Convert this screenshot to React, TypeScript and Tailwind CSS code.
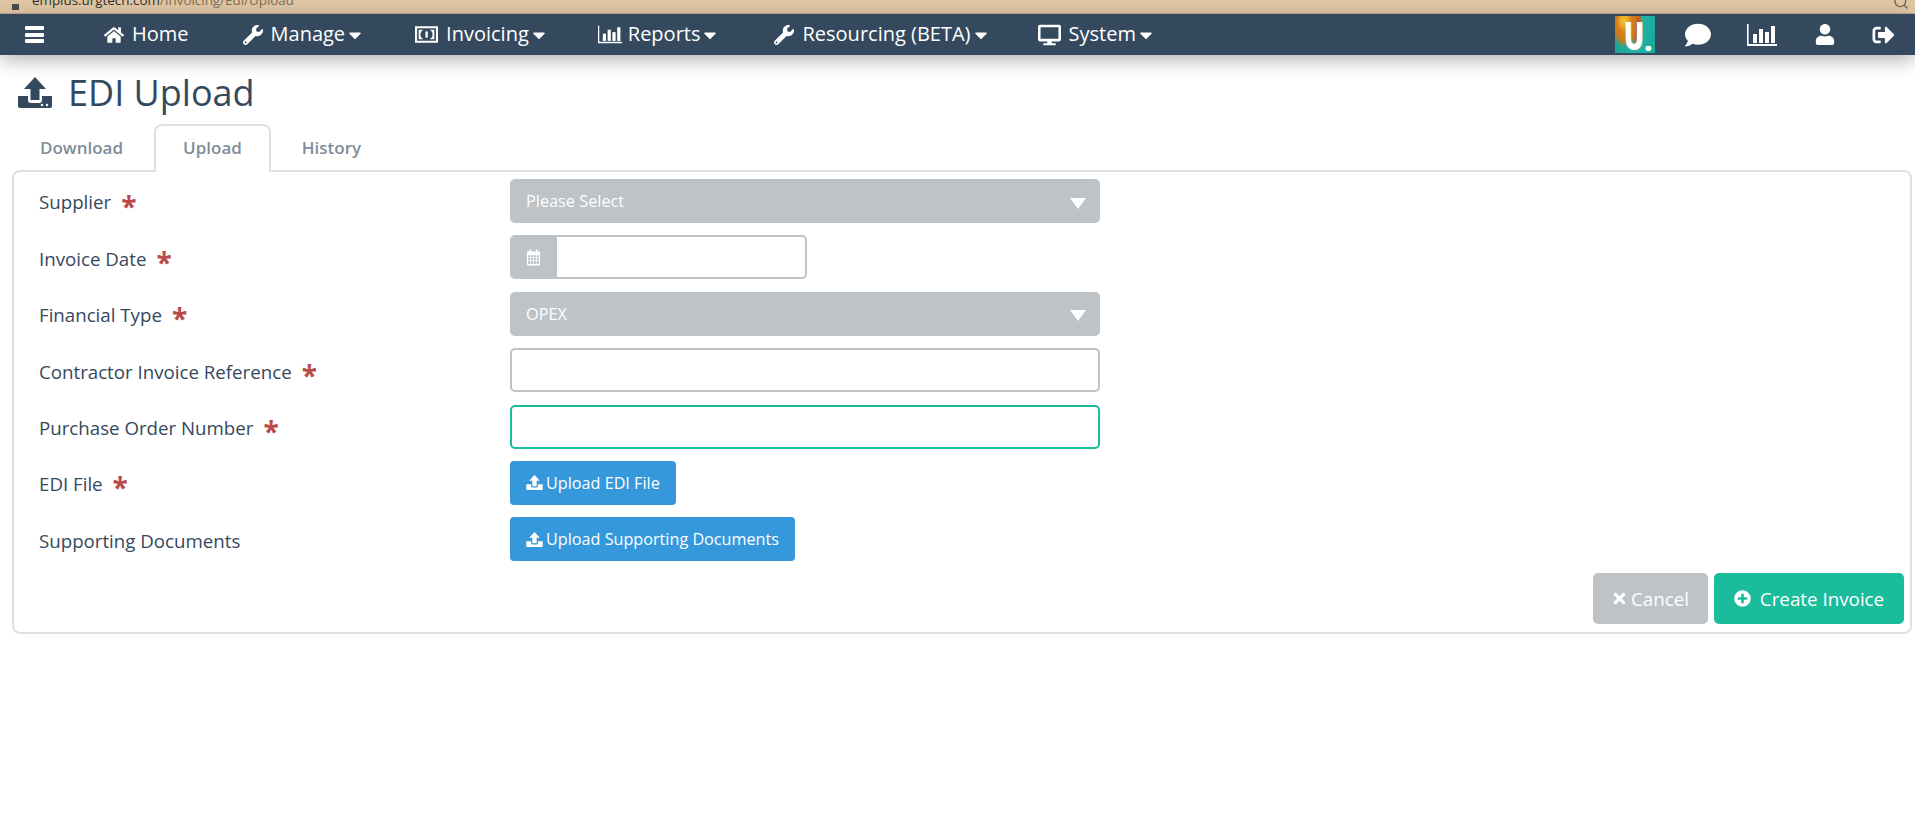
import { FaCaretDown, FaComment, FaDesktop, FaHome, FaPlusCircle, FaSignOutAlt, FaTimes, FaUser, FaWrench } from "react-icons/fa";
import { Search } from "lucide-react";
import { ReactNode } from "react";

function UploadIcon({ className }: { className?: string }) {
  return (
    <svg viewBox="0 0 34 31" className={className} fill="currentColor">
      <path d="M17 0 L28 12 H21.5 V23 H12.5 V12 H6 Z" />
      <path d="M0 19 H10 V23 a3 3 0 0 0 3 3 h8 a3 3 0 0 0 3 -3 V19 H34 V29 a2 2 0 0 1 -2 2 H2 a2 2 0 0 1 -2 -2 Z" />
      <circle cx="24" cy="28" r="1.2" fill="#fff" />
      <circle cx="29" cy="28" r="1.2" fill="#fff" />
    </svg>
  );
}

function BarsIcon({ className }: { className?: string }) {
  return (
    <svg viewBox="0 0 30 22" className={className} fill="currentColor">
      <path d="M0 0 h1.6 v20 h28.4 v2 h-30 z" />
      <rect x="6" y="10" width="4" height="9" />
      <rect x="12" y="5" width="4" height="14" />
      <rect x="18" y="8" width="4" height="11" />
      <rect x="24" y="2" width="4" height="17" />
    </svg>
  );
}

function MoneyIcon({ className }: { className?: string }) {
  return (
    <svg viewBox="0 0 22 16" className={className} fill="currentColor">
      <path fillRule="evenodd" d="M0 0 h22 v16 h-22 z M2 2 v12 h18 v-12 z" />
      <path fillRule="evenodd" d="M3.5 3.5 h4.5 a5 5 0 0 0 0 9 h-4.5 z M18.5 3.5 h-4.5 a5 5 0 0 1 0 9 h4.5 z" />
      <rect x="10" y="5" width="2.2" height="6" />
    </svg>
  );
}

function CalendarIcon({ className }: { className?: string }) {
  return (
    <svg viewBox="0 0 16 18" className={className} fill="currentColor">
      <path fillRule="evenodd" d="M1 2.5 h2.5 v-2 h2 v2 h5 v-2 h2 v2 h2.5 v15 h-14 z M2.2 6.5 v2.2 h2.4 v-2.2 z M5.4 6.5 v2.2 h2.2 v-2.2 z M8.4 6.5 v2.2 h2.2 v-2.2 z M11.4 6.5 v2.2 h2.4 v-2.2 z M2.2 9.5 v2.2 h2.4 v-2.2 z M5.4 9.5 v2.2 h2.2 v-2.2 z M8.4 9.5 v2.2 h2.2 v-2.2 z M11.4 9.5 v2.2 h2.4 v-2.2 z M2.2 12.5 v3.5 h2.4 v-3.5 z M5.4 12.5 v3.5 h2.2 v-3.5 z M8.4 12.5 v3.5 h2.2 v-3.5 z M11.4 12.5 v3.5 h2.4 v-3.5 z" />
    </svg>
  );
}

function LogoTile() {
  return (
    <div className="flex h-[37px] w-[40px] items-end justify-center bg-[radial-gradient(ellipse_7px_10px_at_9px_5px,#f0c53a_0,#e9a825_60%,transparent_100%),radial-gradient(ellipse_14px_24px_at_10px_8px,#dc8f1d_0,#d07a1c_70%,transparent_100%),radial-gradient(ellipse_6px_20px_at_22px_12px,#a8431a_0,#c9641c_65%,transparent_100%),linear-gradient(100deg,#1c9f92,#22b3a6_60%,#17a89c)] pb-[3px] pl-[6px] text-white">
      <span className="inline-block origin-bottom scale-y-[1.42] text-[27px] leading-[20px] font-extrabold">U</span>
      <span className="text-[28px] leading-[20px] font-extrabold">.</span>
    </div>
  );
}

const navItems: { label: string; icon: ReactNode; caret?: boolean; className: string }[] = [
  { label: "Home", icon: <FaHome className="h-[20px] w-[20px]" />, className: "ml-[60px]" },
  { label: "Manage", icon: <FaWrench className="h-[20px] w-[20px]" />, caret: true, className: "ml-[54px]" },
  { label: "Invoicing", icon: <MoneyIcon className="h-[17px] w-[23px]" />, caret: true, className: "ml-[52px]" },
  { label: "Reports", icon: <BarsIcon className="-mr-[2px] h-[21px] w-[24px]" />, caret: true, className: "ml-[51px]" },
  { label: "Resourcing (BETA)", icon: <FaWrench className="h-[20px] w-[20px]" />, caret: true, className: "ml-[56px]" },
  { label: "System", icon: <FaDesktop className="h-[22px] w-[23px]" />, caret: true, className: "ml-[49px]" },
];

function Label({ text, required }: { text: string; required?: boolean }) {
  return (
    <div className="flex w-[496px] shrink-0 items-center pl-[25px] pt-[3px] text-[18.7px] text-[#34495e]">
      <span>{text}</span>
      {required && <span className="ml-[10px] mt-[6px] text-[28px] leading-none font-bold text-[#b94a48]">*</span>}
    </div>
  );
}

function SelectBox({ text }: { text: string }) {
  return (
    <div className="flex h-[44px] w-[590px] items-center justify-between rounded-[5px] bg-[#bdc3c7] pl-[16px] pr-[14px] text-[16.3px] text-white">
      <span>{text}</span>
      <svg viewBox="0 0 16 11" className="mt-[4px] h-[11px] w-[16px]" fill="currentColor">
        <path d="M0 0 H16 L8 11 Z" />
      </svg>
    </div>
  );
}

function FileButton({ text }: { text: string }) {
  return (
    <button className="flex h-[44px] items-center gap-[3px] rounded-[4px] bg-[#3498db] px-[16px] text-[16.2px] text-white">
      <UploadIcon className="h-[15px] w-[17px]" />
      {text}
    </button>
  );
}

function Row({ label, required, children }: { label: string; required?: boolean; children: ReactNode }) {
  return (
    <div className="flex h-[44px] items-center">
      <Label text={label} required={required} />
      {children}
    </div>
  );
}

export default function App() {
  return (
    <div className="min-h-[836px] bg-white [font-family:'Open_Sans',sans-serif]">
      <div className="flex h-[14px] items-end justify-between overflow-hidden border-b border-[#b9a78e] bg-[#dfc5a2] pl-[12px] pr-[6px]">
        <div className="flex items-end gap-[13px] text-[13.4px] leading-[15px] text-[#7b6b58]">
          <span className="mb-[3px] h-[6px] w-[7px] bg-[#4a4a4a]" />
          <span className="mb-[5px]"><span className="text-[#2e2e2e]">emplus.urgtech.com</span>/Invoicing/Edi/Upload</span>
        </div>
        <Search className="mb-[3px] h-[16px] w-[16px] text-[#6d6459]" />
      </div>

      <nav className="flex h-[41px] items-center bg-[#34495e] pl-[25px] pr-[20px] text-[20px] text-white shadow-[0_6px_18px_rgba(0,0,0,0.28)]">
        <div className="flex h-[17px] w-[19px] flex-col justify-between">
          <span className="h-[4px] rounded-[1px] bg-white" />
          <span className="h-[4px] rounded-[1px] bg-white" />
          <span className="h-[4px] rounded-[1px] bg-white" />
        </div>
        {navItems.map((item) => (
          <div key={item.label} className={`flex items-center ${item.className}`}>
            <span className="mr-[8px]">{item.icon}</span>
            <span className="-mt-[1px]">{item.label}</span>
            {item.caret && <FaCaretDown className="ml-[2px] h-[20px] w-[16px]" />}
          </div>
        ))}
        <div className="ml-auto flex items-center">
          <LogoTile />
          <FaComment className="ml-[30px] h-[26px] w-[26px]" />
          <BarsIcon className="ml-[36px] h-[22px] w-[30px]" />
          <FaUser className="ml-[38px] h-[21px] w-[20px]" />
          <FaSignOutAlt className="ml-[37px] h-[22px] w-[23px]" />
        </div>
      </nav>

      <div className="flex h-[69px] items-center pl-[18px] pt-[6px] text-[#34495e]">
        <UploadIcon className="h-[31px] w-[34px]" />
        <h1 className="ml-[16px] text-[36px] leading-none">EDI Upload</h1>
      </div>

      <div className="flex pl-[11px] text-[17px] font-semibold text-[#7f8c9b]">
        <div className="flex h-[46px] w-[139px] items-center justify-center pl-[2px] pt-[2px]">Download</div>
        <div className="relative z-10 ml-[4px] -mb-[2px] flex h-[48px] w-[117px] items-center justify-center rounded-t-[8px] border-2 border-b-0 border-[#e0e0e0] bg-white pb-[2px]">Upload</div>
        <div className="ml-[3px] flex h-[46px] w-[115px] items-center justify-center pt-[2px]">History</div>
      </div>

      <div className="ml-[12px] mr-[3px] h-[464px] rounded-[8px] border-2 border-[#e0e0e0] pt-[7px]">
        <div className="flex flex-col gap-[12.4px]">
          <Row label="Supplier" required><SelectBox text="Please Select" /></Row>
          <Row label="Invoice Date" required>
            <div className="flex h-[44px] w-[297px] overflow-hidden rounded-[5px] border-2 border-l-0 border-[#bdc3c7]">
              <div className="flex w-[47px] items-center justify-center bg-[#bdc3c7] text-white">
                <CalendarIcon className="h-[17px] w-[15px]" />
              </div>
            </div>
          </Row>
          <Row label="Financial Type" required><SelectBox text="OPEX" /></Row>
          <Row label="Contractor Invoice Reference" required>
            <input className="h-[44px] w-[590px] rounded-[5px] border-2 border-[#bdc3c7] outline-none" />
          </Row>
          <Row label="Purchase Order Number" required>
            <input className="h-[44px] w-[590px] rounded-[5px] border-2 border-[#1abc9c] outline-none" />
          </Row>
          <Row label="EDI File" required><FileButton text="Upload EDI File" /></Row>
          <Row label="Supporting Documents"><FileButton text="Upload Supporting Documents" /></Row>
        </div>
        <div className="mt-[12px] flex justify-end gap-[6px] pr-[6px] text-[18.8px] text-white">
          <button className="flex h-[51px] w-[115px] items-center justify-center gap-[4px] rounded-[5px] bg-[#bdc3c7]">
            <FaTimes className="h-[17px] w-[15px]" />
            Cancel
          </button>
          <button className="flex h-[51px] w-[190px] items-center justify-center gap-[9px] rounded-[5px] bg-[#1abc9c]">
            <FaPlusCircle className="h-[17px] w-[17px]" />
            Create Invoice
          </button>
        </div>
      </div>
    </div>
  );
}
